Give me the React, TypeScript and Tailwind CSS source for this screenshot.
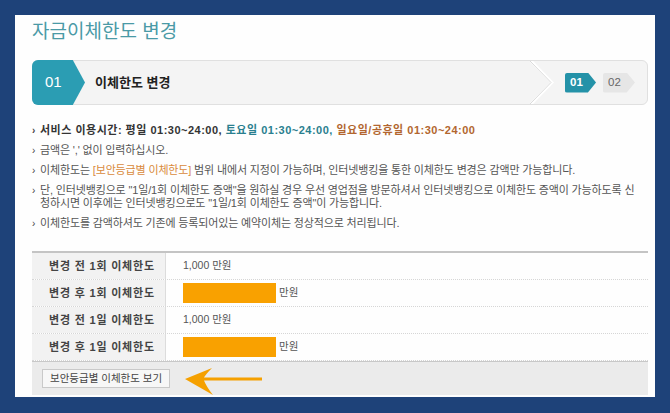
import React from "react"

const font = "font-['Liberation_Sans','Noto_Sans_CJK_KR',sans-serif]"

function Bullet({ children, bold }: { children: React.ReactNode; bold?: boolean }) {
    return (
        <li className={`flex leading-[13px] ${bold ? "font-bold tracking-[0.5px] text-[#333]" : "text-[#555]"}`}>
            <span className="w-[8px] shrink-0 text-[10px] tracking-normal text-[#444]">›</span>
            <span>{children}</span>
        </li>
    )
}

function LimitRow({ label, value, input }: { label: string; value?: string; input?: boolean }) {
    return (
        <div className="grid grid-cols-[134px_1fr] border-b border-dotted border-[#d6d6d6]">
            <div className="flex h-[26px] items-center bg-[#f2f2f2] pl-[17px] text-[11px] font-bold tracking-[0.8px] text-[#444] border-r border-[#dcdcdc]">
                {label}
            </div>
            <div className="flex h-[26px] items-center pl-[17px] text-[10.5px] text-[#555]">
                {input ? (
                    <>
                        <div className="h-[20px] w-[93px] bg-[#f9a100]" />
                        <span className="ml-[3px]">만원</span>
                    </>
                ) : (
                    <span>{value}</span>
                )}
            </div>
        </div>
    )
}

export default function App() {
    return (
        <div className={`min-h-[413px] w-[670px] bg-[#1e4279] pt-[15px] ${font}`}>
            <div className="ml-[15px] h-[382px] w-[640px] bg-[#fefefe] pl-[17px] pr-[7px] pt-[4px]">
                {/* page title */}
                <h1 className="text-[19px] leading-[26px] text-[#4a9aa6]">자금이체한도 변경</h1>

                {/* step bar */}
                <div className="mt-[15px] flex h-[45px] items-center rounded-[6px] border border-[#e0e0e0] bg-[#f4f4f4]">
                    <div className="-ml-px -my-px flex h-[45px] w-[53px] items-center rounded-l-[6px] bg-[#2b9db3] pl-[13px] text-[15px] text-white [clip-path:polygon(0_0,77%_0,100%_50%,77%_100%,0_100%)]">
                        01
                    </div>
                    <span className="ml-[10px] text-[13px] font-bold text-[#222]">이체한도 변경</span>
                    <div className="flex-1" />
                    <div className="flex h-full w-[117px] items-center">
                        <svg width="24" height="43" viewBox="0 0 24 43" className="shrink-0">
                            <polyline points="1,0 22,21.5 1,43" fill="none" stroke="#ffffff" strokeWidth="3" />
                            <polyline points="0,0 21,21.5 0,43" fill="none" stroke="#dadada" strokeWidth="1" />
                        </svg>
                        <div className="ml-[11px] flex h-[20px] w-[31px] items-center rounded-l-[2px] bg-[#2492a8] pl-[5px] text-[11.5px] font-bold text-white [clip-path:polygon(0_0,74%_0,100%_50%,74%_100%,0_100%)]">
                            01
                        </div>
                        <div className="ml-[7px] flex h-[20px] w-[32px] items-center rounded-l-[2px] bg-[#e6e6e6] pl-[5px] text-[11.5px] text-[#666] [clip-path:polygon(0_0,74%_0,100%_50%,74%_100%,0_100%)]">
                            02
                        </div>
                    </div>
                </div>

                {/* notes */}
                <ul className="mt-[19px] flex flex-col gap-[7px] text-[11px] tracking-[-0.15px]">
                    <Bullet bold>
                        서비스 이용시간: 평일 01:30~24:00,{" "}
                        <span className="text-[#2a7f8f]">토요일 01:30~24:00,</span>{" "}
                        <span className="text-[#b2662f]">일요일/공휴일 01:30~24:00</span>
                    </Bullet>
                    <Bullet>금액은 ',' 없이 입력하십시오.</Bullet>
                    <Bullet>
                        이체한도는 <span className="text-[#d98a3c]">[보안등급별 이체한도]</span> 범위 내에서 지정이 가능하며, 인터넷뱅킹을 통한 이체한도 변경은 감액만 가능합니다.
                    </Bullet>
                    <Bullet>
                        단, 인터넷뱅킹으로 "1일/1회 이체한도 증액"을 원하실 경우 우선 영업점을 방문하셔서 인터넷뱅킹으로 이체한도 증액이 가능하도록 신<br />
                        청하시면 이후에는 인터넷뱅킹으로도 "1일/1회 이체한도 증액"이 가능합니다.
                    </Bullet>
                    <Bullet>이체한도를 감액하셔도 기존에 등록되어있는 예약이체는 정상적으로 처리됩니다.</Bullet>
                </ul>

                {/* limits table */}
                <div className="mt-[21px] border-t-[2px] border-[#c4c4c4]">
                    <LimitRow label="변경 전 1회 이체한도" value="1,000 만원" />
                    <LimitRow label="변경 후 1회 이체한도" input />
                    <LimitRow label="변경 전 1일 이체한도" value="1,000 만원" />
                    <LimitRow label="변경 후 1일 이체한도" input />
                    <div className="flex h-[34px] items-center border-t border-[#c8c8c8] bg-[#ebebeb] pl-[10px]">
                        <button className="h-[19px] border border-[#c9c9c9] bg-[#f7f7f7] px-[7px] text-[10.5px] leading-[17px] text-[#444]">
                            보안등급별 이체한도 보기
                        </button>
                        <svg width="80" height="28" viewBox="0 0 80 28" className="ml-[14px] mt-[6px]">
                            <path
                                d="M1 11 L28 0 Q22 6 20 9.5 L78 9.5 L78 12.5 L20 12.5 Q22 18 29 27 Z"
                                fill="#f5a000"
                            />
                        </svg>
                    </div>
                </div>
            </div>
        </div>
    )
}
